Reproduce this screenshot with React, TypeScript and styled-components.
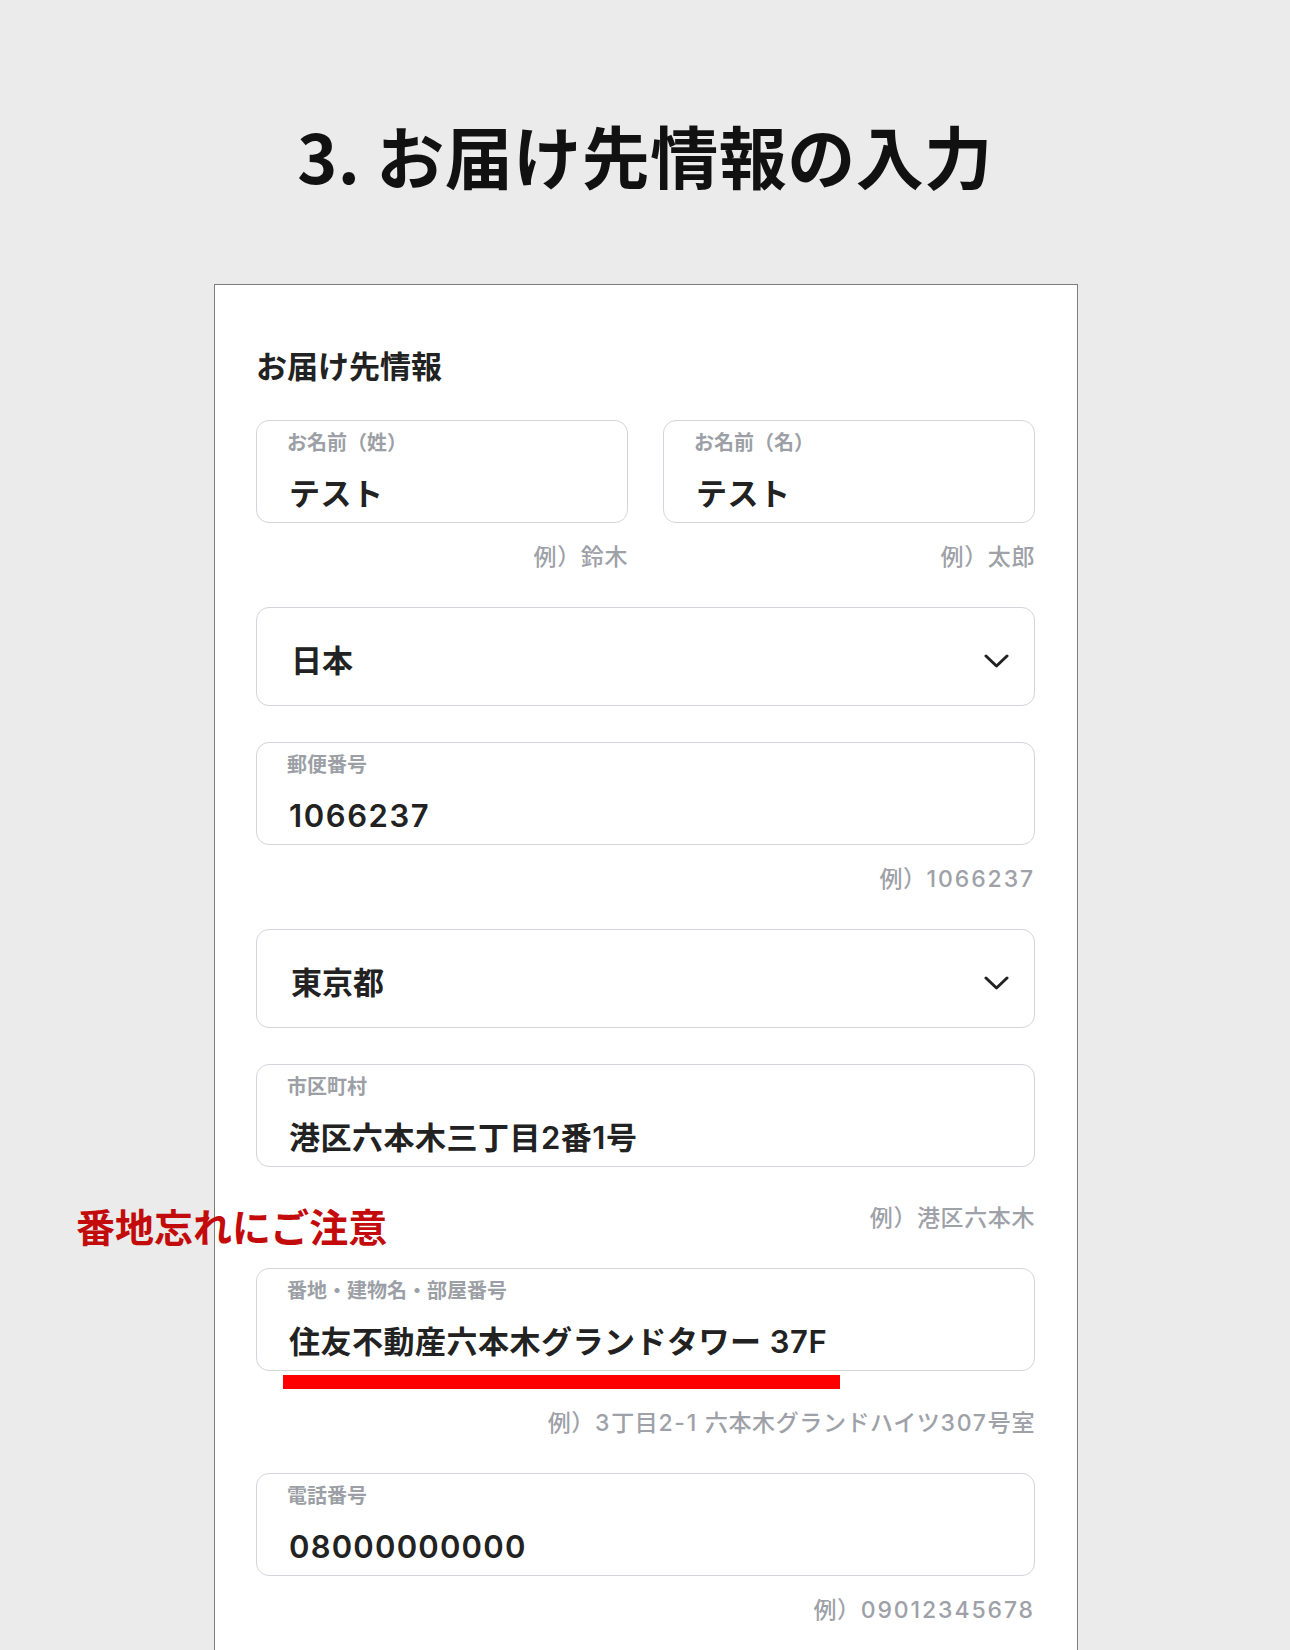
import React from "react";
import styled, { createGlobalStyle } from "styled-components";

const GlobalStyle = createGlobalStyle`
  html, body {
    margin: 0;
    padding: 0;
    background: #ebebeb;
  }
  body {
    font-family: Inter, "Noto Sans CJK JP", sans-serif;
    -webkit-font-smoothing: antialiased;
  }
`;

const Page = styled.div`
  height: 1650px;
  overflow: hidden;
  background: #ebebeb;
  display: flex;
  flex-direction: column;
  align-items: center;
`;

const Title = styled.h1`
  margin: 121px 0 0;
  font-family: "Noto Sans CJK JP", sans-serif;
  font-size: 68px;
  line-height: 68px;
  font-weight: 700;
  color: #111;
  letter-spacing: 0.5px;
`;

const Card = styled.section`
  margin: 95px 0 0 2px;
  width: 864px;
  box-sizing: border-box;
  background: #ffffff;
  border: 1px solid #7d7d7d;
  border-bottom: none;
  padding: 65px 42px 200px 41px;
  display: flex;
  flex-direction: column;
`;

const Heading = styled.h2`
  margin: 0;
  font-family: "Noto Sans CJK JP", sans-serif;
  font-size: 31px;
  line-height: 30px;
  font-weight: 700;
  color: #222;
`;

const NameRow = styled.div`
  margin-top: 40px;
  display: grid;
  grid-template-columns: 1fr 1fr;
  column-gap: 35px;
`;

const Field = styled.div<{ $top?: number }>`
  margin-top: ${(p) => p.$top ?? 0}px;
  display: flex;
  flex-direction: column;
`;

const Box = styled.div`
  height: 103px;
  box-sizing: border-box;
  border: 1px solid #d3d5da;
  border-radius: 13px;
  padding: 11px 30px 0;
  display: flex;
  flex-direction: column;
  gap: 26px;
`;

const Label = styled.span`
  font-family: "Noto Sans CJK JP", sans-serif;
  font-size: 20px;
  line-height: 20px;
  font-weight: 600;
  color: #9c9fa6;
`;

const Value = styled.span`
  padding-left: 2px;
  font-size: 31px;
  line-height: 31px;
  font-weight: 600;
  color: #222;
  letter-spacing: 0.5px;
  white-space: nowrap;
`;

const Num = styled.span<{ $spacing: number }>`
  letter-spacing: ${(p) => p.$spacing}px;
`;

const Hint = styled.div<{ $top?: number }>`
  position: relative;
  margin-top: ${(p) => p.$top ?? 23}px;
  text-align: right;
  font-size: 23px;
  line-height: 23px;
  font-weight: 500;
  color: #9ea1a8;
  letter-spacing: 0.6px;
  white-space: nowrap;
`;

const Note = styled.span`
  position: absolute;
  left: -180px;
  top: -1px;
  font-family: "Noto Sans CJK JP", sans-serif;
  font-size: 39px;
  line-height: 39px;
  font-weight: 700;
  color: #c40b0b;
  letter-spacing: 0;
`;

const Highlight = styled.div`
  margin: 4px 0 0 27px;
  width: 557px;
  height: 14px;
  background: #ff0000;
`;

const Select = styled.div<{ $top: number }>`
  margin-top: ${(p) => p.$top}px;
  height: 99px;
  box-sizing: border-box;
  border: 1px solid #d3d5da;
  border-radius: 13px;
  padding: 4px 25px 0 34px;
  display: flex;
  align-items: center;
  justify-content: space-between;
`;

const SelectText = styled.span`
  font-family: "Noto Sans CJK JP", sans-serif;
  font-size: 31px;
  line-height: 31px;
  font-weight: 600;
  color: #222;
`;

const Chevron = styled.svg`
  width: 25px;
  height: 14px;
  margin-top: 4px;
  display: block;
`;

const ChevronIcon = () => (
  <Chevron viewBox="0 0 25 14" fill="none">
    <polyline
      points="2,2 12.5,12 23,2"
      stroke="#222"
      strokeWidth="3"
      strokeLinecap="round"
      strokeLinejoin="round"
    />
  </Chevron>
);

type InputProps = {
  label: string;
  children: React.ReactNode;
};

const InputBox = ({ label, children }: InputProps) => (
  <Box>
    <Label>{label}</Label>
    <Value>{children}</Value>
  </Box>
);

export default function App() {
  return (
    <>
      <GlobalStyle />
      <Page>
        <Title>3. お届け先情報の入力</Title>
        <Card>
          <Heading>お届け先情報</Heading>
          <NameRow>
            <Field>
              <InputBox label="お名前（姓）">テスト</InputBox>
              <Hint>例）鈴木</Hint>
            </Field>
            <Field>
              <InputBox label="お名前（名）">テスト</InputBox>
              <Hint>例）太郎</Hint>
            </Field>
          </NameRow>

          <Select $top={38}>
            <SelectText>日本</SelectText>
            <ChevronIcon />
          </Select>

          <Field $top={36}>
            <InputBox label="郵便番号">
              <Num $spacing={1.6}>1066237</Num>
            </InputBox>
            <Hint>
              例）<Num $spacing={1.9}>1066237</Num>
            </Hint>
          </Field>

          <Select $top={38}>
            <SelectText>東京都</SelectText>
            <ChevronIcon />
          </Select>

          <Field $top={36}>
            <InputBox label="市区町村">港区六本木三丁目2番1号</InputBox>
            <Hint $top={40}>
              <Note>番地忘れにご注意</Note>
              例）港区六本木
            </Hint>
          </Field>

          <Field $top={38}>
            <InputBox label="番地・建物名・部屋番号">
              住友不動産六本木グランドタワー 37F
            </InputBox>
            <Highlight />
            <Hint>
              例）<Num $spacing={1.8}>3</Num>丁目<Num $spacing={1.8}>2-1</Num> 六本木グランドハイツ
              <Num $spacing={1.8}>307</Num>号室
            </Hint>
          </Field>

          <Field $top={38}>
            <InputBox label="電話番号">
              <Num $spacing={1.2}>08000000000</Num>
            </InputBox>
            <Hint>
              例）<Num $spacing={1.9}>09012345678</Num>
            </Hint>
          </Field>
        </Card>
      </Page>
    </>
  );
}
